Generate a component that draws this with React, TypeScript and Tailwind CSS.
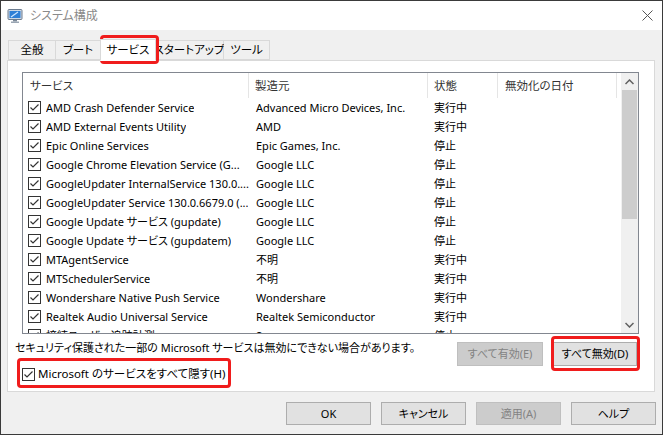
import React from "react";

type Row = { name: string; maker: string; status: string };

const rows: Row[] = [
  { name: "AMD Crash Defender Service", maker: "Advanced Micro Devices, Inc.", status: "実行中" },
  { name: "AMD External Events Utility", maker: "AMD", status: "実行中" },
  { name: "Epic Online Services", maker: "Epic Games, Inc.", status: "停止" },
  { name: "Google Chrome Elevation Service (G...", maker: "Google LLC", status: "停止" },
  { name: "GoogleUpdater InternalService 130.0....", maker: "Google LLC", status: "停止" },
  { name: "GoogleUpdater Service 130.0.6679.0 (...", maker: "Google LLC", status: "停止" },
  { name: "Google Update サービス (gupdate)", maker: "Google LLC", status: "停止" },
  { name: "Google Update サービス (gupdatem)", maker: "Google LLC", status: "停止" },
  { name: "MTAgentService", maker: "不明", status: "実行中" },
  { name: "MTSchedulerService", maker: "不明", status: "実行中" },
  { name: "Wondershare Native Push Service", maker: "Wondershare", status: "実行中" },
  { name: "Realtek Audio Universal Service", maker: "Realtek Semiconductor", status: "実行中" },
  { name: "接続ユーザー追跡計測", maker: "Sa", status: "停止" },
];

const tabs = [
  { label: "全般", w: "w-[48px]" },
  { label: "ブート", w: "w-[45px]" },
  { label: "サービス", w: "w-[56px]", active: true },
  { label: "スタートアップ", w: "w-[69px]" },
  { label: "ツール", w: "w-[46px]" },
];

function CheckBox() {
  return (
    <svg width="13" height="13" viewBox="0 0 13 13" className="shrink-0">
      <rect x="0.5" y="0.5" width="12" height="12" fill="#fff" stroke="#333" />
      <polyline points="2.5,6.5 5,9 10.5,3.5" fill="none" stroke="#333" strokeWidth="1.2" />
    </svg>
  );
}

function WinButton({ label, disabled }: { label: string; disabled?: boolean }) {
  return (
    <div
      className={
        disabled
          ? "w-[85px] h-[23px] flex items-center justify-center border border-[#bfbfbf] bg-[#cccccc] text-[#838383]"
          : "w-[85px] h-[23px] flex items-center justify-center border border-[#adadad] bg-[#e1e1e1] text-black"
      }
    >
      {label}
    </div>
  );
}

export default function App() {
  return (
    <div className="relative w-[663px] h-[435px] border border-[#3a3a3a] bg-[#f0f0f0] flex flex-col text-[11px] leading-[16px] text-black font-['Noto_Sans','Noto_Sans_CJK_JP',sans-serif] [font-feature-settings:'palt'] overflow-hidden whitespace-nowrap">
      {/* Title bar */}
      <div className="h-[29px] bg-white flex items-center pl-[6px] pr-[8px] shrink-0">
        <svg width="16" height="16" viewBox="0 0 16 16">
          <rect x="1" y="1.5" width="14" height="10" rx="1" fill="#cfd8e3" stroke="#6b7b8f" />
          <rect x="2.5" y="3" width="11" height="7" fill="#2f7fd6" />
          <path d="M4 9 L11 4" stroke="#cfe6ff" strokeWidth="1.2" />
          <rect x="6" y="12" width="4" height="1.5" fill="#7d8a99" />
          <rect x="4" y="13.5" width="8" height="1.5" fill="#9aa6b3" />
        </svg>
        <span className="ml-[7px] text-[12px] text-[#8a8a8a]">システム構成</span>
        <div className="flex-1" />
        <svg width="11" height="11" viewBox="0 0 11 11" className="mr-[1px]">
          <path d="M0.5 0.5 L10.5 10.5 M10.5 0.5 L0.5 10.5" stroke="#555" strokeWidth="1" />
        </svg>
      </div>

      {/* Tabs */}
      <div className="flex items-end h-[30px] pl-[7px] shrink-0 text-[11.5px]">
        <div className="flex items-end">
          {tabs.map((t) =>
            t.active ? (
              <div
                key={t.label}
                className={`${t.w} h-[22px] -mx-[1px] relative z-10 -mb-px bg-white border border-[#d9d9d9] border-b-white flex items-center justify-center`}
              >
                {t.label}
              </div>
            ) : (
              <div
                key={t.label}
                className={`${t.w} h-[20px] border border-[#d9d9d9] border-l-0 first:border-l bg-[#f0f0f0] flex items-center justify-center`}
              >
                {t.label}
              </div>
            )
          )}
        </div>
      </div>

      {/* Panel */}
      <div className="ml-[6px] w-[648px] h-[332px] border border-[#d9d9d9] bg-white flex flex-col shrink-0">
        {/* List */}
        <div className="mt-[11px] ml-[14px] w-[617px] h-[262px] border border-[#828790] flex overflow-hidden">
          <div className="flex-1 flex flex-col overflow-hidden">
            <div className="h-[25px] flex shrink-0 text-[#333] text-[11.5px]">
              <div className="w-[226px] pl-[7px] flex items-center border-r border-[#e5e5e5]">サービス</div>
              <div className="w-[179px] pl-[6px] flex items-center border-r border-[#e5e5e5]">製造元</div>
              <div className="w-[70px] pl-[6px] flex items-center border-r border-[#e5e5e5]">状態</div>
              <div className="w-[119px] pl-[7px] flex items-center border-r border-[#e5e5e5]">無効化の日付</div>
            </div>
            {rows.map((r) => (
              <div key={r.name} className="h-[19px] flex items-center shrink-0">
                <div className="w-[226px] pl-[5px] flex items-center gap-[5px] overflow-hidden">
                  <CheckBox />
                  <span className="overflow-hidden">{r.name}</span>
                </div>
                <div className="w-[179px] pl-[7px] overflow-hidden">{r.maker}</div>
                <div className="w-[70px] pl-[6px]">{r.status}</div>
              </div>
            ))}
          </div>
          {/* Scrollbar */}
          <div className="w-[17px] bg-[#f0f0f0] flex flex-col shrink-0">
            <div className="h-[17px] flex items-center justify-center">
              <svg width="9" height="6" viewBox="0 0 9 6">
                <path d="M0.5 5 L4.5 1 L8.5 5" fill="none" stroke="#606060" strokeWidth="1.5" />
              </svg>
            </div>
            <div className="mx-[1px] h-[129px] bg-[#cdcdcd]" />
            <div className="flex-1" />
            <div className="h-[17px] flex items-center justify-center">
              <svg width="9" height="6" viewBox="0 0 9 6">
                <path d="M0.5 1 L4.5 5 L8.5 1" fill="none" stroke="#606060" strokeWidth="1.5" />
              </svg>
            </div>
          </div>
        </div>

        {/* Notice + buttons */}
        <div className="mt-[6px] flex items-start pr-[17px]">
          <span className="pl-[7px] flex-1">セキュリティ保護された一部の Microsoft サービスは無効にできない場合があります。</span>
          <div className="mt-[2px] flex gap-[10px]">
            <div className="w-[86px] h-[24px] flex items-center justify-center border border-[#bfbfbf] bg-[#cccccc] text-[#838383]">
              すべて有効(E)
            </div>
            <div className="w-[84px] h-[24px] flex items-center justify-center border border-[#adadad] bg-[#e1e1e1]">
              すべて無効(D)
            </div>
          </div>
        </div>

        <div className="ml-[14px] flex items-center gap-[3px] h-[16px] text-[11.5px]">
          <CheckBox />
          <span>Microsoft のサービスをすべて隠す(H)</span>
        </div>
      </div>

      {/* Dialog buttons */}
      <div className="mt-[10px] flex justify-end gap-[10px] pr-[6px]">
        <WinButton label="OK" />
        <WinButton label="キャンセル" />
        <WinButton label="適用(A)" disabled />
        <WinButton label="ヘルプ" />
      </div>

      {/* Red annotation boxes */}
      <div className="absolute left-[99px] top-[34px] w-[59px] h-[29px] border-[3px] border-[#f01c1c] rounded-[4px] pointer-events-none" />
      <div className="absolute left-[550px] top-[335px] w-[89px] h-[35px] border-[3px] border-[#f01c1c] rounded-[4px] pointer-events-none" />
      <div className="absolute left-[16px] top-[357px] w-[214px] h-[30px] border-[3px] border-[#f01c1c] rounded-[4px] pointer-events-none" />
    </div>
  );
}
